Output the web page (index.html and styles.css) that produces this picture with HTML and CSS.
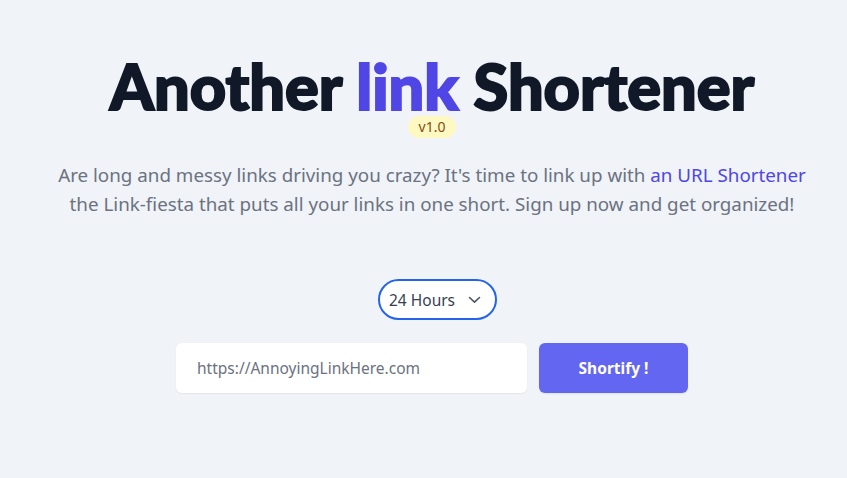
FILE: index.html
```html
<!DOCTYPE html>
<html lang="en">
<head>
<meta charset="utf-8">
<title>Another link Shortener</title>
<link rel="stylesheet" href="styles.css">
</head>
<body>
<main class="page">
  <h1 class="title">Another <span class="accent">link</span> Shortener</h1>
  <span class="badge">v1.0</span>
  <p class="lead">Are long and messy links driving you crazy? It's time to link up with <a class="lead-link" href="#">an URL Shortener</a><br>the Link-fiesta that puts all your links in one short. Sign up now and get organized!</p>
  <div class="select">
    <span class="select-text">24 Hours</span>
    <svg class="chev" width="13" height="8" viewBox="0 0 13 8"><path d="M1.5 1.5 L6.5 6.2 L11.5 1.5" fill="none" stroke="#4b5563" stroke-width="1.6" stroke-linecap="round" stroke-linejoin="round"/></svg>
  </div>
  <form class="form">
    <input class="url" type="text" placeholder="https://AnnoyingLinkHere.com">
    <button class="btn" type="button">Shortify !</button>
  </form>
</main>
</body>
</html>
```
FILE: styles.css
```css
html, body { margin: 0; padding: 0; }
body {
  background: #f0f3f8;
  font-family: "Noto Sans", "Open Sans", sans-serif;
  width: 847px;
  height: 478px;
  overflow: hidden;
}
.page {
  display: flex;
  flex-direction: column;
  align-items: center;
  padding: 58px 0 0 17px;
}
.title {
  margin: 0;
  font-family: Lato, "Noto Sans", sans-serif;
  font-size: 63px;
  font-weight: 900;
  color: #111827;
  -webkit-text-stroke: 2px #111827;
  line-height: 56px;
}
.accent { color: #4f46e5; -webkit-text-stroke: 2px #4f46e5; }
.badge {
  margin-top: 2px;
  background: #fef9c3;
  color: #854d0e;
  font-size: 14px;
  line-height: 22px;
  padding: 0 11px;
  border-radius: 11px;
}
.lead {
  margin: 23px 0 0;
  text-align: center;
  font-size: 18.8px;
  line-height: 29px;
  color: #6b7280;
}
.lead-link { color: #4f46e5; text-decoration: none; }
.select {
  margin: 60px 0 0 11px;
  box-sizing: border-box;
  width: 119px;
  height: 41px;
  border: 2px solid #2563eb;
  border-radius: 21px;
  background: #fff;
  display: flex;
  align-items: center;
  justify-content: space-between;
  padding: 0 14px 0 9px;
}
.select-text { font-size: 15.5px; color: #374151; }
.form {
  margin-top: 23px;
  display: flex;
  gap: 12px;
}
.url {
  box-sizing: border-box;
  width: 351px;
  height: 50px;
  border: none;
  border-radius: 6px;
  background: #fff;
  box-shadow: 0 1px 2px rgba(0,0,0,0.06);
  padding: 0 21px;
  font-family: inherit;
  font-size: 15.5px;
  outline: none;
}
.url::placeholder { color: #6b7280; }
.btn {
  width: 149px;
  height: 50px;
  border: none;
  border-radius: 6px;
  background: #6366f1;
  color: #fff;
  font-family: inherit;
  font-weight: 700;
  font-size: 15.5px;
  box-shadow: 0 1px 2px rgba(0,0,0,0.08);
}
```
